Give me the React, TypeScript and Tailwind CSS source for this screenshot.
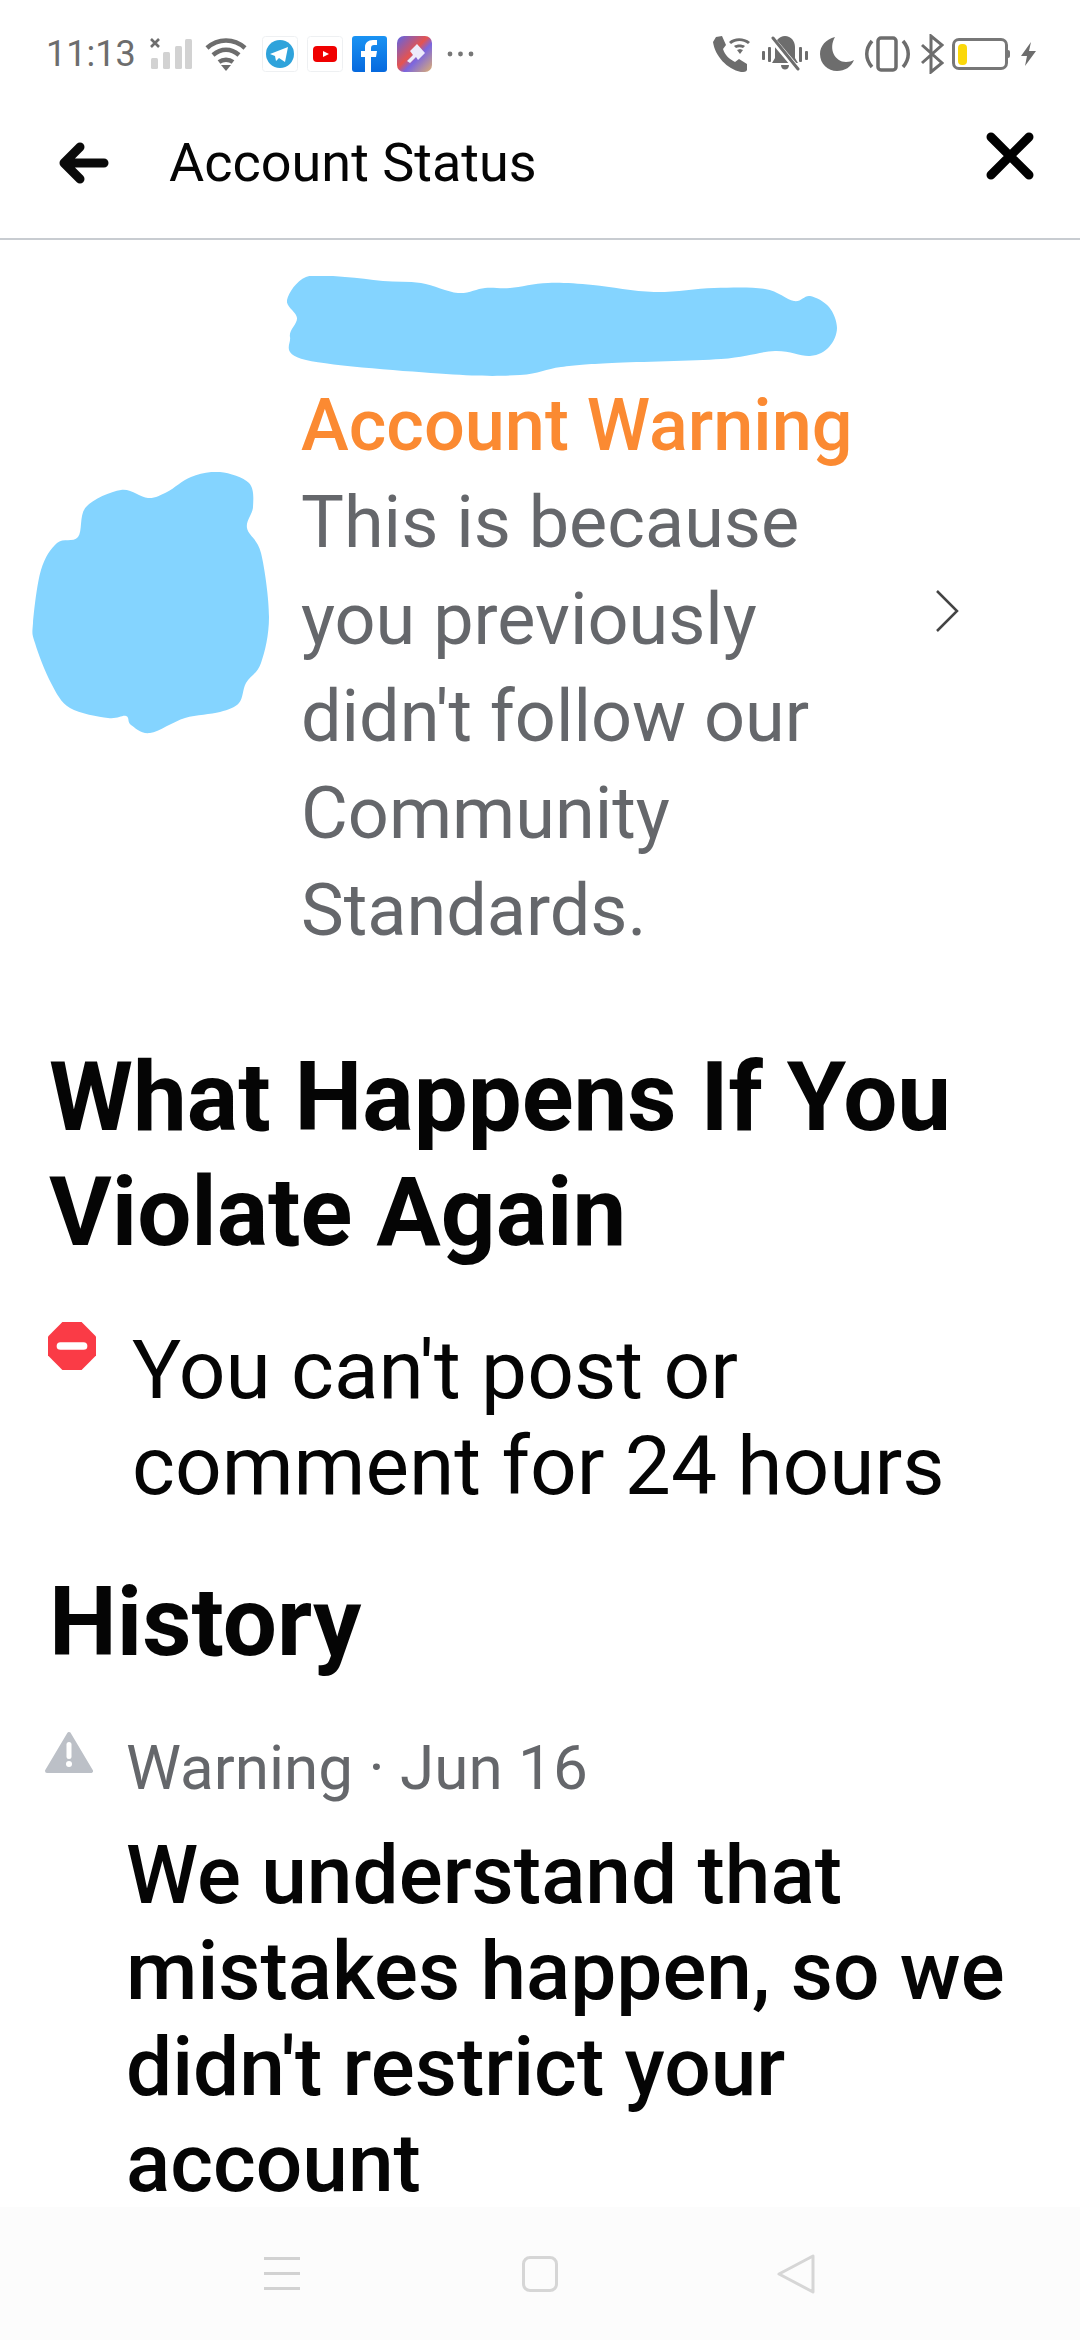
const nameBlob: [number, number][] = [
  [306, 277], [345, 277], [383, 281], [421, 283], [458, 293], [485, 288], [510, 288], [548, 283], [593, 285], [654, 292],
  [714, 288], [765, 289], [794, 301], [810, 296], [829, 307], [837, 328], [829, 347], [810, 356], [775, 351],
  [721, 359], [612, 363], [561, 367], [520, 375], [446, 374], [306, 360], [290, 337], [297, 318], [287, 300],
]

const avatarBlob: [number, number][] = [
  [220, 472], [249, 483], [253, 507], [247, 528], [261, 553], [269, 617], [261, 663], [246, 683], [239, 703],
  [220, 712], [185, 718], [150, 733], [131, 725], [126, 716], [108, 718], [70, 708], [51, 683], [35, 643],
  [33, 623], [41, 570], [57, 543], [78, 537], [86, 507], [121, 490], [148, 498], [167, 492], [191, 477],
]

// closed catmull-rom through the traced points
const smoothPath = (pts: [number, number][]) => {
  const n = pts.length
  let d = `M${pts[0][0]} ${pts[0][1]}`
  pts.forEach((p, i) => {
    const prev = pts[(i - 1 + n) % n]
    const next = pts[(i + 1) % n]
    const after = pts[(i + 2) % n]
    const c1 = [p[0] + (next[0] - prev[0]) / 6, p[1] + (next[1] - prev[1]) / 6]
    const c2 = [next[0] - (after[0] - p[0]) / 6, next[1] - (after[1] - p[1]) / 6]
    d += ` C${c1[0]} ${c1[1]} ${c2[0]} ${c2[1]} ${next[0]} ${next[1]}`
  })
  return d + 'Z'
}

const StatusLeft = () => (
  <div className="flex items-center">
    <span className="ml-[46px] text-[36px] leading-none text-[#6d6d6d]">11:13</span>
    <svg className="ml-[14px]" width="44" height="32" viewBox="0 0 44 32">
      <path d="M1 1l8 8M9 1l-8 8" stroke="#6d6d6d" strokeWidth="2.6" />
      <rect x="1" y="20" width="7" height="11" rx="1.5" fill="#d2d2d2" />
      <rect x="13" y="14" width="7" height="17" rx="1.5" fill="#d2d2d2" />
      <rect x="25" y="8" width="7" height="23" rx="1.5" fill="#d2d2d2" />
      <rect x="35" y="1" width="7" height="30" rx="1.5" fill="#d2d2d2" />
    </svg>
    <svg className="ml-[11px]" width="42" height="34" viewBox="0 0 42 34" fill="none" stroke="#6d6d6d" strokeWidth="4.5">
      <path d="M2 11c11-10 27-10 38 0" />
      <path d="M8 18c8-7 18-7 26 0" />
      <path d="M14 25c4-3 10-3 14 0" />
      <path d="M16 28h10l-5 6z" fill="#6d6d6d" stroke="none" />
    </svg>
    <svg className="ml-[15px]" width="36" height="36" viewBox="0 0 36 36">
      <rect x="0.5" y="0.5" width="35" height="35" rx="3" fill="#fff" stroke="#eef0f2" />
      <circle cx="18" cy="18" r="14" fill="#2fa3db" />
      <path d="M8 18l18-7-3 15-6-4-3 3-1-5z" fill="#fff" />
    </svg>
    <svg className="ml-[9px]" width="36" height="36" viewBox="0 0 36 36">
      <rect x="0.5" y="0.5" width="35" height="35" rx="3" fill="#fff" stroke="#eef0f2" />
      <rect x="6" y="10" width="24" height="16" rx="4" fill="#f00000" />
      <path d="M16 15l6 3-6 3z" fill="#fff" />
    </svg>
    <svg className="ml-[9px]" width="35" height="36" viewBox="0 0 35 36">
      <defs>
        <linearGradient id="fb" x1="0" y1="0" x2="0" y2="1">
          <stop offset="0" stopColor="#1a93f3" />
          <stop offset="1" stopColor="#0669de" />
        </linearGradient>
      </defs>
      <rect width="35" height="36" rx="3" fill="url(#fb)" />
      <path d="M19 36V21h5l1-6h-6v-3c0-2 1-3 3-3h3V4h-4c-5 0-8 3-8 7v4H9v6h4v15z" fill="#fff" />
    </svg>
    <svg className="ml-[10px]" width="35" height="36" viewBox="0 0 35 36">
      <defs>
        <linearGradient id="ap" x1="0" y1="0" x2="1" y2="1">
          <stop offset="0" stopColor="#5c64e8" />
          <stop offset="0.45" stopColor="#e5534f" />
          <stop offset="0.6" stopColor="#7a66e0" />
          <stop offset="1" stopColor="#e0b070" />
        </linearGradient>
      </defs>
      <rect width="35" height="36" rx="7" fill="url(#ap)" />
      <path d="M20 8l8 9-7 7-2-3-6 6-3-2 6-6-3-4z" fill="#ecebfb" />
    </svg>
    <svg className="ml-[15px]" width="27" height="6" viewBox="0 0 27 6" fill="#777">
      <circle cx="3" cy="3" r="2.4" />
      <circle cx="13.5" cy="3" r="2.4" />
      <circle cx="24" cy="3" r="2.4" />
    </svg>
  </div>
)

const StatusRight = () => (
  <div className="flex items-center">
    <svg width="38" height="36" viewBox="0 0 38 36" fill="#6d6d6d">
      <path d="M3 1l6-1 4 9-3 4c2 6 6 10 12 13l4-3 8 5v6c-1 2-3 2-6 2C14 33 2 20 0 6z" />
      <path d="M16 6c5-5 15-5 21 0l-2 2c-5-4-12-4-17 0zM21 10c3-2 8-2 11 0l-2 2c-2-1-5-1-7 0z" />
      <path d="M24 14l3-1 3 1-3 4z" />
    </svg>
    <svg className="ml-[11px]" width="46" height="36" viewBox="0 0 46 36" fill="#6d6d6d">
      <rect x="0" y="15" width="3" height="9" rx="1" />
      <rect x="6" y="11" width="3" height="15" rx="1" />
      <rect x="37" y="11" width="3" height="15" rx="1" />
      <rect x="43" y="15" width="3" height="9" rx="1" />
      <path d="M23 0c6 0 10 5 10 11v11l3 5H10l3-5V11c0-6 4-11 10-11zM19 29h8c0 6-8 6-8 0z" />
      <path d="M10 3l27 32" stroke="#fff" strokeWidth="6" />
      <path d="M11 2l25 31" stroke="#6d6d6d" strokeWidth="3" strokeLinecap="round" />
    </svg>
    <svg className="ml-[12px]" width="34" height="34" viewBox="0 0 34 34" fill="#6d6d6d">
      <path d="M15 0C6 2 0 9 0 17c0 10 8 17 17 17 8 0 14-4 17-11-2 1-5 2-8 2C15 25 8 12 15 0z" />
    </svg>
    <svg className="ml-[11px]" width="45" height="36" viewBox="0 0 45 36" fill="none" stroke="#6d6d6d">
      <rect x="13" y="2" width="18" height="32" rx="3" strokeWidth="3.5" />
      <path d="M7 5c-7 8-7 18 0 26M38 5c7 8 7 18 0 26" strokeWidth="3.5" />
    </svg>
    <svg className="ml-[10px]" width="24" height="40" viewBox="0 0 24 40" fill="none" stroke="#6d6d6d" strokeWidth="3">
      <path d="M2 11l20 18-11 9V2l11 9L2 29" />
    </svg>
    <div className="ml-[8px] flex h-[32px] w-[56px] items-center rounded-[7px] border-[3px] border-[#777] pl-[3px]">
      <div className="h-[21px] w-[9px] rounded-[4px] bg-[#fbd80a]" />
    </div>
    <div className="h-[8px] w-[2px] rounded-r-[2px] bg-[#777]" />
    <svg className="ml-[10px]" width="17" height="24" viewBox="0 0 17 24" fill="#6d6d6d">
      <path d="M11 0L1 14h6l-2 10 11-15h-7z" />
    </svg>
  </div>
)

export default function App() {
  return (
    <div className="flex h-[2340px] w-[1080px] flex-col overflow-hidden bg-white [font-family:Roboto,sans-serif]">
      <div className="flex h-[106px] shrink-0 items-center justify-between pr-[43px] pt-[2px]">
        <StatusLeft />
        <StatusRight />
      </div>

      <div className="flex h-[134px] shrink-0 items-center border-b-2 border-[#c8ccd1] pb-[18px]">
        <svg className="ml-[59px]" width="50" height="42" viewBox="0 0 50 42" fill="none" stroke="#0a0a0a" strokeWidth="9" strokeLinecap="round" strokeLinejoin="round">
          <path d="M45 21H6M21 5L5 21l16 16" />
        </svg>
        <span className="ml-[60px] text-[54px] leading-none text-[#050505]">Account Status</span>
        <svg className="mb-[14px] ml-auto mr-[46px]" width="48" height="48" viewBox="0 0 48 48" fill="none" stroke="#000" strokeWidth="9" strokeLinecap="round">
          <path d="M5 5l38 38M43 5L5 43" />
        </svg>
      </div>

      <div className="min-h-0 flex-1">
        <div className="flex items-center pt-[36px]">
          <svg className="mb-[29px] ml-[32px] shrink-0" width="238" height="262" viewBox="32 472 238 262">
            <path d={smoothPath(avatarBlob)} fill="#84d4ff" />
          </svg>
          <div className="ml-[31px] w-[634px]">
            <svg className="-ml-[14px] block" width="552" height="100" viewBox="287 276 552 100">
              <path d={smoothPath(nameBlob)} fill="#84d4ff" />
            </svg>
            <div className="mt-[1px] text-[72px] leading-[97px] font-medium text-[#fb8a32]">Account Warning</div>
            <div className="w-[540px] text-[72px] leading-[97px] text-[#65676b]">
              This is because you previously didn't follow our Community Standards.
            </div>
          </div>
          <svg className="mb-[14px]" width="24" height="42" viewBox="0 0 24 42" fill="none" stroke="#444" strokeWidth="2.5">
            <path d="M2 1l20 20L2 41" />
          </svg>
        </div>

        <div className="px-[49px] pt-[81px]">
          <h1 className="text-[96px] leading-[115px] font-bold text-[#050505]">What Happens If You Violate Again</h1>
          <div className="mt-[52px] flex items-start">
            <svg className="-ml-[1px] shrink-0" width="48" height="48" viewBox="0 0 50 50">
              <path d="M15 0h20l15 15v20L35 50H15L0 35V15z" fill="#fa3b46" />
              <rect x="9" y="21" width="32" height="8" rx="4" fill="#fff" />
            </svg>
            <p className="ml-[36px] text-[82px] leading-[96px] text-[#050505]">You can't post or comment for 24 hours</p>
          </div>
          <h2 className="mt-[51px] text-[96px] leading-[115px] font-bold text-[#050505]">History</h2>
          <div className="mt-[44px] flex items-start">
            <svg className="-ml-[4px] mt-[7px] shrink-0" width="48" height="42" viewBox="0 0 48 42">
              <path d="M24 3L46 40H2z" fill="#bcc0c7" stroke="#bcc0c7" strokeWidth="4" strokeLinejoin="round" />
              <rect x="21.5" y="11" width="5" height="17" rx="2.5" fill="#fff" />
              <circle cx="24" cy="33" r="3" fill="#fff" />
            </svg>
            <div className="ml-[33px]">
              <div className="text-[62px] leading-[88px] text-[#65676b]">Warning · Jun 16</div>
              <p className="mt-[15px] text-[82px] leading-[96px] font-medium text-[#050505]">
                We understand that mistakes happen, so we didn't restrict your account
              </p>
            </div>
          </div>
        </div>
      </div>

      <div className="flex h-[133px] shrink-0 items-center bg-[#fcfcfc]">
        <div className="ml-[264px] flex w-[36px] flex-col gap-[12px]">
          <div className="h-[3px] bg-[#d2d2d2]" />
          <div className="h-[3px] bg-[#d2d2d2]" />
          <div className="h-[3px] bg-[#d2d2d2]" />
        </div>
        <div className="ml-[222px] h-[36px] w-[36px] rounded-[8px] border-[3px] border-[#d6d6d6]" />
        <svg className="ml-[219px]" width="38" height="40" viewBox="0 0 38 40" fill="none" stroke="#d6d6d6" strokeWidth="3" strokeLinejoin="round">
          <path d="M36 2v36L2 20z" />
        </svg>
      </div>
    </div>
  )
}
